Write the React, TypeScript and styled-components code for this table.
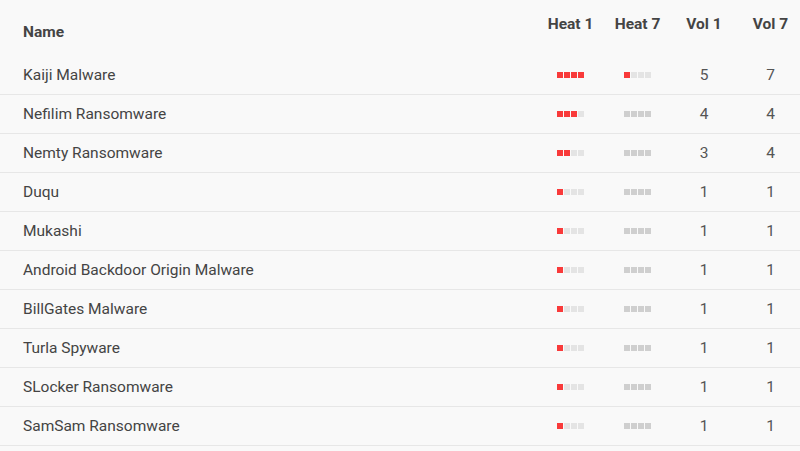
import styled, { createGlobalStyle } from 'styled-components'

const GlobalStyle = createGlobalStyle`
  html, body {
    margin: 0;
    padding: 0;
    background: #f9f9f9;
    overflow: hidden;
  }
  body {
    font-family: Roboto, "Liberation Sans", Arial, sans-serif;
    color: #444;
  }
`

const Table = styled.div`
  width: 804px;
  display: flex;
  flex-direction: column;
`

const Row = styled.div<{ $header?: boolean }>`
  display: grid;
  grid-template-columns: 514px 67px 67px 66px 67px;
  padding-left: 23px;
  height: ${p => (p.$header ? '56px' : '38px')};
  border-bottom: ${p => (p.$header ? 'none' : '1px solid #e7e7e7')};
  align-items: center;
`

const HeadCell = styled.div<{ $top: number; $center?: boolean }>`
  align-self: start;
  padding-top: ${p => p.$top}px;
  font-size: 15.5px;
  font-weight: 700;
  color: #444;
  text-align: ${p => (p.$center ? 'center' : 'left')};
  line-height: 16px;
`

const NameCell = styled.div`
  font-size: 15.5px;
  color: #444;
  line-height: 18px;
`

const NumCell = styled.div`
  font-size: 15.5px;
  color: #555;
  text-align: center;
  line-height: 18px;
`

const Meter = styled.div`
  display: flex;
  justify-content: center;
  gap: 1px;
`

const Pip = styled.span<{ $tone: 'on' | 'off' | 'none' }>`
  width: 6px;
  height: 6px;
  background: ${p => (p.$tone === 'on' ? '#f93a3a' : p.$tone === 'off' ? '#e4e4e4' : '#cfcfcf')};
`

type Entry = { name: string; h1: number; h7: number; v1: number; v7: number }

const rows: Entry[] = [
  { name: 'Kaiji Malware', h1: 4, h7: 1, v1: 5, v7: 7 },
  { name: 'Nefilim Ransomware', h1: 3, h7: 0, v1: 4, v7: 4 },
  { name: 'Nemty Ransomware', h1: 2, h7: 0, v1: 3, v7: 4 },
  { name: 'Duqu', h1: 1, h7: 0, v1: 1, v7: 1 },
  { name: 'Mukashi', h1: 1, h7: 0, v1: 1, v7: 1 },
  { name: 'Android Backdoor Origin Malware', h1: 1, h7: 0, v1: 1, v7: 1 },
  { name: 'BillGates Malware', h1: 1, h7: 0, v1: 1, v7: 1 },
  { name: 'Turla Spyware', h1: 1, h7: 0, v1: 1, v7: 1 },
  { name: 'SLocker Ransomware', h1: 1, h7: 0, v1: 1, v7: 1 },
  { name: 'SamSam Ransomware', h1: 1, h7: 0, v1: 1, v7: 1 },
]

function HeatMeter({ level }: { level: number }) {
  return (
    <Meter>
      {[0, 1, 2, 3].map(i => (
        <Pip key={i} $tone={level === 0 ? 'none' : i < level ? 'on' : 'off'} />
      ))}
    </Meter>
  )
}

export default function App() {
  return (
    <>
      <GlobalStyle />
      <Table>
        <Row $header>
          <HeadCell $top={24}>Name</HeadCell>
          <HeadCell $top={16} $center>Heat 1</HeadCell>
          <HeadCell $top={16} $center>Heat 7</HeadCell>
          <HeadCell $top={16} $center>Vol 1</HeadCell>
          <HeadCell $top={16} $center>Vol 7</HeadCell>
        </Row>
        {rows.map(r => (
          <Row key={r.name}>
            <NameCell>{r.name}</NameCell>
            <HeatMeter level={r.h1} />
            <HeatMeter level={r.h7} />
            <NumCell>{r.v1}</NumCell>
            <NumCell>{r.v7}</NumCell>
          </Row>
        ))}
      </Table>
    </>
  )
}
